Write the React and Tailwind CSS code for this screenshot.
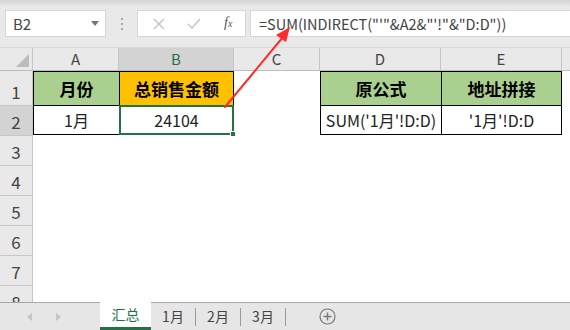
import React from 'react';

const FONT = '"Noto Sans CJK SC", "Microsoft YaHei", sans-serif';

const cols = [
  { key: 'A', w: 86 },
  { key: 'B', w: 115, sel: true },
  { key: 'C', w: 86 },
  { key: 'D', w: 121 },
  { key: 'E', w: 121 },
  { key: '', w: 40 },
];

const FormulaBar = () => (
  <div className="h-[48px] bg-gradient-to-b from-[#d4d4d4] via-[#e9e9e9] via-15% to-[#e9e9e9] flex items-start pt-[10px] pl-[5px] border-b border-[#d9d9d9]">
    <div className="w-[101px] h-[27px] bg-white border border-[#d6d6d6] flex items-center justify-between pl-[7px] pr-[6px]">
      <span className="text-[15px] text-[#444] leading-[20px]">B2</span>
      <svg width="8" height="5" viewBox="0 0 8 5"><path d="M0 0h8L4 5z" fill="#777" /></svg>
    </div>
    <div className="w-[31px] h-[27px] flex flex-col items-center justify-center gap-[3px]">
      <span className="w-[2px] h-[2px] bg-[#a6a6a6]" />
      <span className="w-[2px] h-[2px] bg-[#a6a6a6]" />
      <span className="w-[2px] h-[2px] bg-[#a6a6a6]" />
    </div>
    <div className="w-[109px] h-[27px] bg-white border border-[#d6d6d6] flex items-center">
      <svg className="ml-[15px]" width="12" height="12" viewBox="0 0 12 12"><path d="M1 1l10 10M11 1L1 11" stroke="#c2c2c2" strokeWidth="1.4" /></svg>
      <svg className="ml-[22px]" width="14" height="11" viewBox="0 0 14 11"><path d="M1 6l4 4 8-9" stroke="#c2c2c2" strokeWidth="1.4" fill="none" /></svg>
      <span className="ml-[23px] text-[14px] italic text-[#555] leading-[20px]" style={{ fontFamily: '"Liberation Serif", serif' }}>
        f<span className="text-[10px]">x</span>
      </span>
    </div>
    <div className="ml-[4px] flex-1 h-[27px] bg-white border-y border-l border-[#d6d6d6] flex items-center pl-[8px]">
      <span className="text-[14.5px] text-[#444] leading-[20px] whitespace-nowrap">=SUM(INDIRECT("'"&amp;A2&amp;"'!"&amp;"D:D"))</span>
    </div>
  </div>
);

const ColHeader = () => (
  <div className="flex h-[23px] border-b border-[#bdbdbd]">
    <div className="w-[33px] shrink-0 bg-[#e9e9e9] border-r border-[#c6c6c6] flex items-end justify-end pr-[3px] pb-[3px]">
      <svg width="13" height="13" viewBox="0 0 13 13"><path d="M13 0V13H0z" fill="#bcbcbc" /></svg>
    </div>
    {cols.map((c, i) => (
      <div
        key={i}
        style={{ width: c.w }}
        className={`shrink-0 border-r border-[#c6c6c6] flex items-center justify-center text-[15px] leading-[18px] ${c.sel ? 'bg-[#d3d3d3] text-[#217346]' : 'bg-[#e9e9e9] text-[#444]'}`}
      >
        {c.key}
      </div>
    ))}
  </div>
);

const RowHead = ({ n, h, sel }) => (
  <div
    style={{ height: h }}
    className={`w-[33px] shrink-0 border-r border-b border-[#c6c6c6] flex items-end justify-center pb-[2px] text-[17px] leading-[22px] text-[#444] ${sel ? 'bg-[#d3d3d3]' : 'bg-[#e9e9e9]'}`}
  >
    {n}
  </div>
);

const Sheet = () => (
  <div className="relative flex-1 overflow-hidden bg-white">
    <ColHeader />
    <div className="flex">
      <div className="flex flex-col">
        <RowHead n={1} h={35} />
        <RowHead n={2} h={30} sel />
        {[3, 4, 5, 6, 7, 8].map((n) => (
          <RowHead key={n} n={n} h={30} />
        ))}
      </div>
      <div className="flex flex-col">
        {/* row 1 */}
        <div className="flex h-[35px]">
          <div className="w-[86px] bg-[#a9d08e] border border-black border-r-0 flex items-center justify-center font-bold text-[17px] text-black">月份</div>
          <div className="w-[115px] bg-[#ffc000] border border-black flex items-center justify-center font-bold text-[17px] text-black">总销售金额</div>
          <div className="w-[86px]" />
          <div className="w-[121px] bg-[#a9d08e] border border-black border-r-0 flex items-center justify-center font-bold text-[17px] text-black">原公式</div>
          <div className="w-[121px] bg-[#a9d08e] border border-black flex items-center justify-center font-bold text-[17px] text-black">地址拼接</div>
        </div>
        {/* row 2 */}
        <div className="flex h-[30px] -mt-px">
          <div className="w-[86px] border border-black border-r-0 flex items-center justify-center text-[16px] text-[#222]">1月</div>
          <div className="relative w-[115px] border-2 border-[#217346] flex items-center justify-center text-[16px] text-[#222]">
            24104
            <span className="absolute -right-[4px] -bottom-[4px] w-[6px] h-[6px] bg-[#217346] border border-white" />
          </div>
          <div className="w-[86px]" />
          <div className="w-[121px] border border-black border-r-0 flex items-center justify-center text-[16px] text-[#222] whitespace-nowrap">SUM('1月'!D:D)</div>
          <div className="w-[121px] border border-black flex items-center justify-center text-[16px] text-[#222] whitespace-nowrap">'1月'!D:D</div>
        </div>
      </div>
    </div>
  </div>
);

const TabBar = () => (
  <div className="h-[28px] shrink-0 bg-[#e6e6e6] border-t border-[#a6a6a6] flex items-stretch">
    <div className="w-[100px] flex items-center">
      <svg className="ml-[27px]" width="5" height="8" viewBox="0 0 5 8"><path d="M5 0v8L0 4z" fill="#c4c4c4" /></svg>
      <svg className="ml-[24px]" width="5" height="8" viewBox="0 0 5 8"><path d="M0 0v8l5-4z" fill="#c4c4c4" /></svg>
    </div>
    <div className="w-[51px] -mt-px bg-white border-b-[3px] border-[#217346] flex items-center justify-center text-[14px] text-[#217346]">汇总</div>
    {['1月', '2月', '3月'].map((t) => (
      <div key={t} className="flex items-center">
        <div className="w-[44px] flex items-center justify-center text-[14px] text-[#444]">{t}</div>
        <span className="w-px h-[18px] bg-[#9a9a9a]" />
      </div>
    ))}
    <div className="ml-[33px] flex items-center">
      <svg width="17" height="17" viewBox="0 0 17 17">
        <circle cx="8.5" cy="8.5" r="7.5" fill="none" stroke="#7a7a7a" strokeWidth="1.2" />
        <path d="M8.5 4.5v8M4.5 8.5h8" stroke="#7a7a7a" strokeWidth="1.5" />
      </svg>
    </div>
  </div>
);

export default function App() {
  return (
    <div className="relative w-[570px] h-[330px] overflow-hidden flex flex-col bg-white" style={{ fontFamily: FONT }}>
      <FormulaBar />
      <Sheet />
      <TabBar />
      {/* red arrow pointing at the formula */}
      <svg className="absolute left-0 top-0 pointer-events-none" width="570" height="330">
        <path d="M225 107L283 37" stroke="#ff2a2a" strokeWidth="2" strokeLinecap="round" />
        <path d="M290 27L276 35L286 42z" fill="#ff2a2a" />
      </svg>
    </div>
  );
}
